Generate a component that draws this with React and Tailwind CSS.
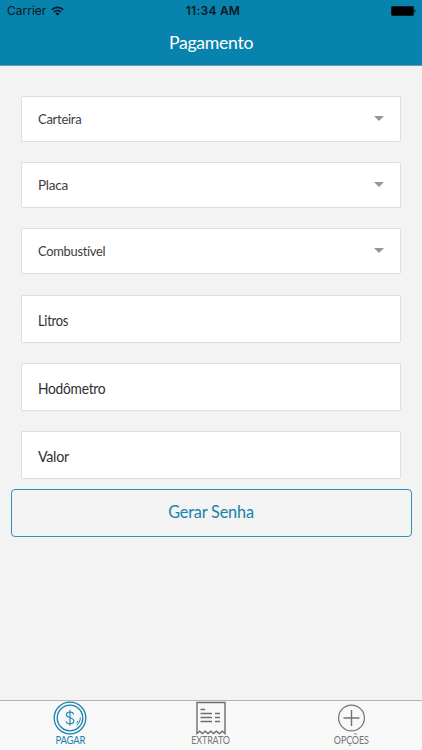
import React from "react";

function Select({ label, scale }) {
  return (
    <div className="flex h-[46px] items-center justify-between rounded-[2px] border border-[#dedede] bg-white pr-[16px] pl-[16px]">
      <span className={`origin-left text-[14px] leading-[18px] tracking-[-0.3px] text-[#3c3c3c] ${scale}`}>{label}</span>
      <svg className="mb-px h-[5px] w-[10px]" viewBox="0 0 10 5">
        <path d="M0 0H10L5 5Z" fill="#969696" />
      </svg>
    </div>
  );
}

function Field({ label, scale }) {
  return (
    <div className="flex h-[48px] items-center rounded-[2px] border border-[#dedede] bg-white pt-[2px] pl-[16px]">
      <span className={`origin-left text-[15px] leading-[18px] tracking-[-0.3px] text-[#303030] ${scale}`}>{label}</span>
    </div>
  );
}

function StatusBar() {
  return (
    <div className="grid h-[22px] grid-cols-3 items-center font-['Inter',sans-serif] text-[12px] leading-[14px] text-[#071820]">
      <div className="flex items-center gap-[5px] pl-[7px]">
        <span>Carrier</span>
        <svg className="h-[10px] w-[13px]" viewBox="0 0 13 10" fill="none" stroke="#071820" strokeWidth="1.6">
          <path d="M.7 3.7A8.3 8.3 0 0 1 12.3 3.7" />
          <path d="M2.8 6A5.3 5.3 0 0 1 10.2 6" />
          <path d="M6.5 9.6 4.4 7.5A3 3 0 0 1 8.6 7.5Z" fill="#071820" stroke="none" />
        </svg>
      </div>
      <span className="pl-[4px] text-center font-semibold tracking-[0.25px] whitespace-nowrap">11:34 AM</span>
      <div className="flex justify-end pr-[6px]">
        <svg className="h-[10px] w-[25px]" viewBox="0 0 25 10">
          <rect x=".25" y=".25" width="22.5" height="9.5" rx="1.2" fill="#000" />
          <path d="M23.5 3.5h.4q1.1 1.5 0 3h-.4Z" fill="#000" />
        </svg>
      </div>
    </div>
  );
}

function CoinIcon() {
  return (
    <svg className="h-[34px] w-[34px]" viewBox="0 0 34 34" fill="none" stroke="#1682ad" strokeWidth="1.3">
      <circle cx="17" cy="17" r="15.8" />
      <circle cx="17" cy="17" r="12.8" />
      <path d="M20.6 13.4C20.4 11.8 19 11 17 11C14.8 11 13.4 12 13.4 13.8C13.4 17.7 20.8 15.7 20.8 19.8C20.8 21.7 19.1 22.8 17 22.8C14.8 22.8 13.4 21.8 13.2 20.2M17 9V24.8" strokeWidth="1.1" />
      <path d="M27.3 16.4C27.3 19.8 26 22.4 23.8 24.2M25 19.8Q24.4 21.3 23.4 22.4" strokeWidth="1" />
    </svg>
  );
}

function ReceiptIcon() {
  return (
    <svg className="h-[34px] w-[30px]" viewBox="0 0 30 34" fill="none" stroke="#6e6e6e" strokeWidth="1.4">
      <path d="M1 32.5V1.5H29V32.5L26.4 30.2L23.4 32.6L20.4 30.2L17.6 32.6L14.8 30.2L12 32.6L9.2 30.2L6.4 32.6L3.6 30.2Z" />
      <path d="M4.5 8.5H9M4.5 12.5H16M19 12.5H24M4.5 16.5H16M19 16.5H24M4.5 20.5H16M19 20.5H24" strokeWidth="1.6" />
    </svg>
  );
}

function PlusIcon() {
  return (
    <svg className="h-[34px] w-[28px]" viewBox="0 0 28 34" fill="none" stroke="#737373" strokeWidth="1.2">
      <circle cx="13.5" cy="17" r="12.9" />
      <path d="M13.5 9V25M5.5 17H21.5" strokeWidth="1.4" />
    </svg>
  );
}

function Tab({ icon, label, style }) {
  return (
    <div className="flex flex-1 flex-col items-center">
      {icon}
      <span className={`mt-[-1px] text-[11px] leading-[12px] tracking-[-0.2px] ${style}`}>{label}</span>
    </div>
  );
}

export default function App() {
  return (
    <div className="flex h-[750px] w-[422px] flex-col overflow-hidden bg-[#f3f3f3] font-['Lato',sans-serif]">
      <header className="h-[66px] border-b border-[#6699ad] bg-[#0783ae]">
        <StatusBar />
        <h1 className="scale-x-[0.98] pt-[9px] text-center text-[18px] leading-[23px] tracking-[-0.3px] text-white">Pagamento</h1>
      </header>
      <main className="flex-1 pt-[30px]">
        <div className="flex flex-col gap-[20px] px-[21px]">
          <Select label="Carteira" scale="scale-x-[0.93]" />
          <Select label="Placa" scale="scale-x-[0.97]" />
          <Select label="Combustível" scale="scale-x-[0.92]" />
        </div>
        <div className="mt-[21px] flex flex-col gap-[20px] px-[21px]">
          <Field label="Litros" scale="scale-x-[0.86]" />
          <Field label="Hodômetro" scale="scale-x-[0.92]" />
          <Field label="Valor" scale="scale-x-[0.95]" />
        </div>
        <button className="mx-[10.5px] mt-[10px] flex h-[48px] w-[401px] items-center justify-center rounded-[4px] border border-[#318fb5] pb-[3px] text-[#1682ad]">
          <span className="scale-x-[0.93] text-[17.5px] leading-[22px] tracking-[-0.2px]">Gerar Senha</span>
        </button>
      </main>
      <nav className="flex h-[50px] border-t border-[#b4b4b4] bg-[#f8f8f8]">
        <Tab icon={<CoinIcon />} label="PAGAR" style="scale-x-[0.86] text-[#1682ad]" />
        <Tab icon={<ReceiptIcon />} label="EXTRATO" style="scale-x-[0.82] text-[#777777]" />
        <Tab icon={<PlusIcon />} label="OPÇÕES" style="scale-x-[0.82] text-[#777777]" />
      </nav>
    </div>
  );
}
